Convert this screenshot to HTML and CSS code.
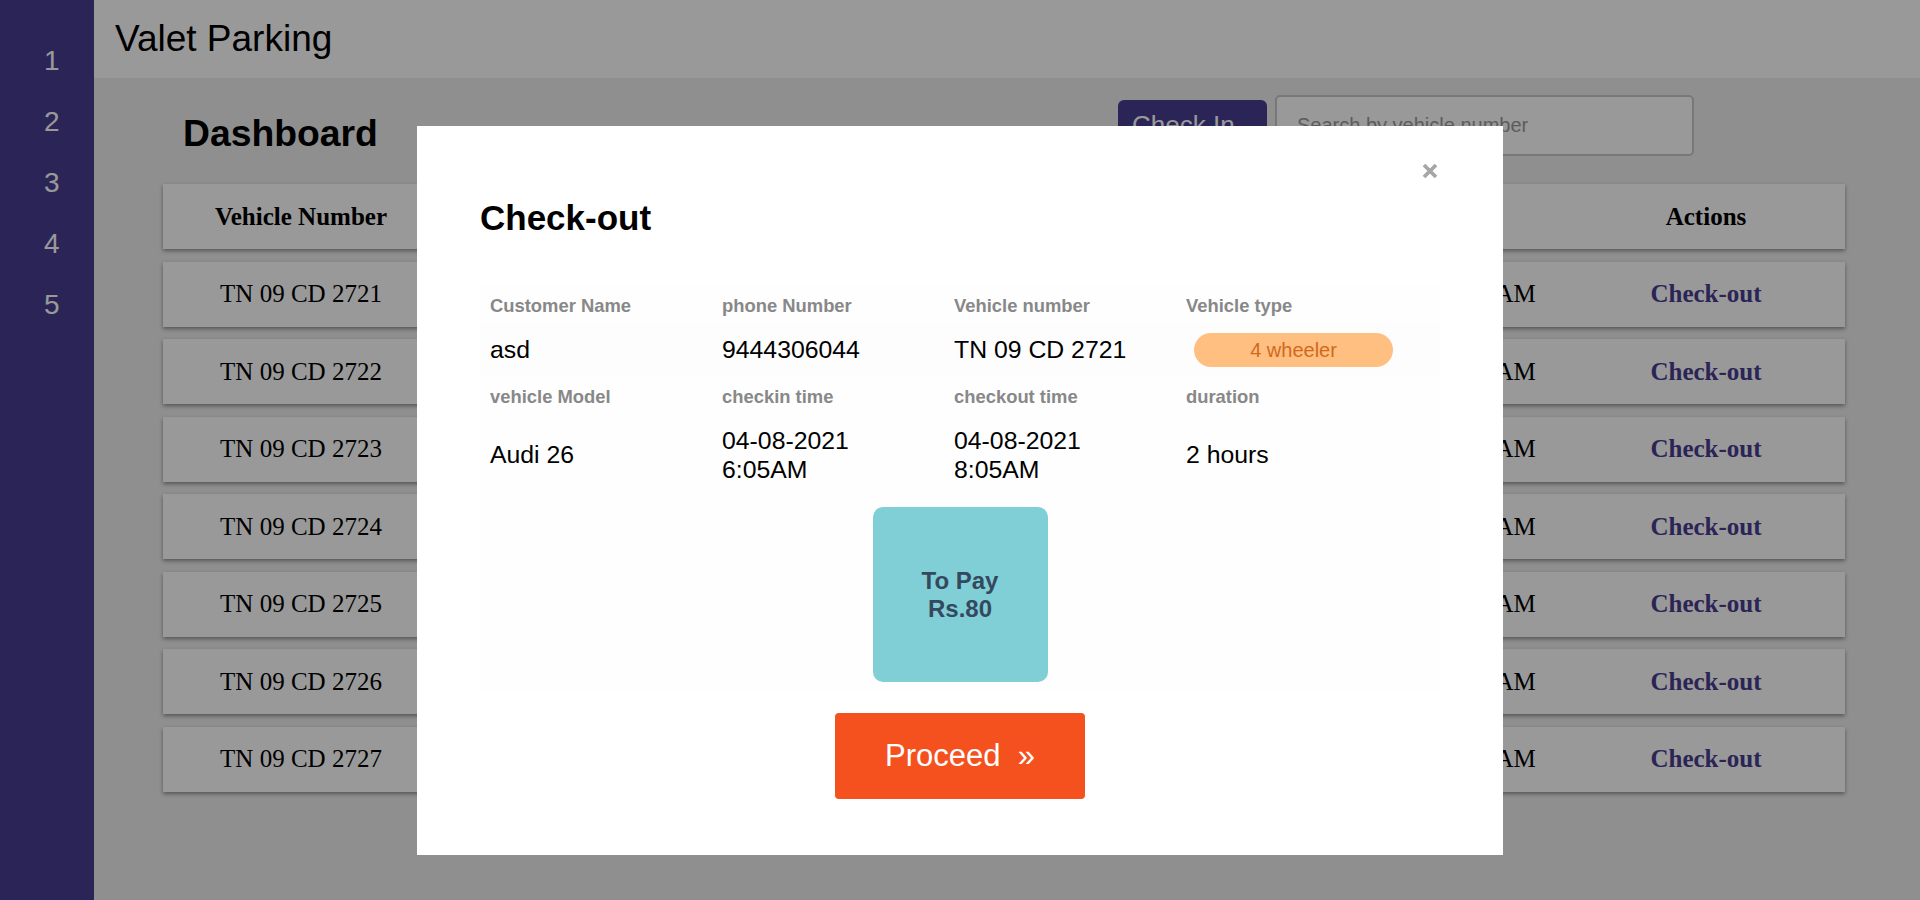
FILE: index.html
```html
<!DOCTYPE html>
<html lang="en">
<head>
<meta charset="utf-8">
<title>Valet Parking</title>
<link rel="stylesheet" href="styles.css">
</head>
<body>
<div class="app">
  <nav class="sidebar">
    <ul class="nav-list">
      <li class="nav-item">1</li>
      <li class="nav-item">2</li>
      <li class="nav-item">3</li>
      <li class="nav-item">4</li>
      <li class="nav-item">5</li>
    </ul>
  </nav>
  <div class="main">
    <header class="topbar"><span class="brand">Valet Parking</span></header>
    <section class="content">
      <div class="dash-head">
        <h1 class="dash-title">Dashboard</h1>
        <div class="toolbar">
          <button class="btn-checkin">Check In</button>
          <input class="search" type="text" placeholder="Search by vehicle number">
        </div>
      </div>
      <div class="table">
        <div class="trow thead">
          <div class="cell">Vehicle Number</div>
          <div class="cell">Customer</div>
          <div class="cell">Type</div>
          <div class="cell">Check-in</div>
          <div class="cell">Actions</div>
        </div>
        <div class="trow">
          <div class="cell">TN 09 CD 2721</div><div class="cell">asd</div><div class="cell">4 wheeler</div>
          <div class="cell">04-08-2021 6:05AM</div><div class="cell link">Check-out</div>
        </div>
        <div class="trow">
          <div class="cell">TN 09 CD 2722</div><div class="cell">asd</div><div class="cell">4 wheeler</div>
          <div class="cell">04-08-2021 6:05AM</div><div class="cell link">Check-out</div>
        </div>
        <div class="trow">
          <div class="cell">TN 09 CD 2723</div><div class="cell">asd</div><div class="cell">4 wheeler</div>
          <div class="cell">04-08-2021 6:05AM</div><div class="cell link">Check-out</div>
        </div>
        <div class="trow">
          <div class="cell">TN 09 CD 2724</div><div class="cell">asd</div><div class="cell">4 wheeler</div>
          <div class="cell">04-08-2021 6:05AM</div><div class="cell link">Check-out</div>
        </div>
        <div class="trow">
          <div class="cell">TN 09 CD 2725</div><div class="cell">asd</div><div class="cell">4 wheeler</div>
          <div class="cell">04-08-2021 6:05AM</div><div class="cell link">Check-out</div>
        </div>
        <div class="trow">
          <div class="cell">TN 09 CD 2726</div><div class="cell">asd</div><div class="cell">4 wheeler</div>
          <div class="cell">04-08-2021 6:05AM</div><div class="cell link">Check-out</div>
        </div>
        <div class="trow">
          <div class="cell">TN 09 CD 2727</div><div class="cell">asd</div><div class="cell">4 wheeler</div>
          <div class="cell">04-08-2021 6:05AM</div><div class="cell link">Check-out</div>
        </div>
      </div>
    </section>
  </div>
</div>

<div class="overlay">
  <div class="modal">
    <button class="close" aria-label="Close">
      <svg width="16" height="16" viewBox="0 0 16 16"><path d="M2 2 L14 14 M14 2 L2 14" stroke="#a6a6a6" stroke-width="3.8" fill="none"/></svg>
    </button>
    <h2 class="modal-title">Check-out</h2>
    <div class="info-box">
      <table class="info">
        <colgroup><col class="col-a"><col class="col-a"><col class="col-a"><col class="col-b"></colgroup>
        <tr class="lbl r1"><td>Customer Name</td><td>phone Number</td><td>Vehicle number</td><td>Vehicle type</td></tr>
        <tr class="val r2"><td>asd</td><td>9444306044</td><td>TN 09 CD 2721</td><td><span class="badge">4 wheeler</span></td></tr>
        <tr class="lbl r3"><td>vehicle Model</td><td>checkin time</td><td>checkout time</td><td>duration</td></tr>
        <tr class="val r4"><td>Audi 26</td><td>04-08-2021<br>6:05AM</td><td>04-08-2021<br>8:05AM</td><td>2 hours</td></tr>
      </table>
      <div class="pay-wrap"><div class="pay">To Pay<br>Rs.80</div></div>
    </div>
    <div class="actions"><button class="proceed">Proceed &nbsp;»</button></div>
  </div>
</div>
</body>
</html>
```

FILE: styles.css
```css
* { box-sizing: border-box; }
html, body { margin: 0; padding: 0; }
body {
  font-family: "Liberation Sans", Arial, sans-serif;
  background: #eeeeee;
  color: #000;
}

.app { display: flex; height: 900px; }

/* sidebar */
.sidebar {
  width: 94px;
  flex: none;
  background: #483c8f;
  padding-top: 31px;
}
.nav-list { list-style: none; margin: 0; padding: 0; }
.nav-item {
  font-size: 28px;
  line-height: 32px;
  padding: 14.4px 0 14.4px 44px;
  color: #ffffff;
}

/* main */
.main {
  flex: 1;
  min-width: 0;
  display: flex;
  flex-direction: column;
  background: #eeeeee;
}
.topbar {
  height: 78px;
  flex: none;
  background: #ffffff;
  padding: 18px 21px 0;
}
.brand { display: block; font-size: 37px; line-height: 42px; }

.content { padding: 0 75px 0 69px; }
.dash-head { display: flex; align-items: flex-start; height: 106px; }
.dash-title {
  margin: 34px 0 0 20px;
  font-size: 37.3px;
  line-height: 42px;
  font-weight: bold;
}
.toolbar {
  margin-left: auto;
  margin-right: 151px;
  padding-top: 17px;
  display: flex;
  align-items: flex-start;
  gap: 8px;
}
.btn-checkin {
  margin-top: 5px;
  width: 149px;
  height: 50px;
  border: 0;
  border-radius: 6px;
  background: #483c8f;
  color: #fff;
  font-family: "Liberation Sans", Arial, sans-serif;
  font-size: 26px;
  text-align: left;
  padding: 0 0 0 14px;
}
.search {
  width: 419px;
  height: 61px;
  border: 2px solid #c8c8c8;
  border-radius: 5px;
  background: #fff;
  padding: 0 0 0 20px;
  font-family: "Liberation Sans", Arial, sans-serif;
  font-size: 20px;
}
.search::placeholder { color: #9a9a9a; }

/* table */
.table {
  display: flex;
  flex-direction: column;
  gap: 12.5px;
  font-family: "Liberation Serif", "Times New Roman", serif;
  font-size: 25px;
}
.trow {
  display: grid;
  grid-template-columns: 276px 429px 429px 270px 278px;
  height: 65px;
  align-items: center;
  text-align: center;
  background: #ffffff;
  box-shadow: 0 2px 4px rgba(0, 0, 0, 0.4);
}
.thead { font-weight: bold; }
.cell { white-space: nowrap; }
.link { color: #483c8f; font-weight: bold; }

/* modal */
.overlay {
  position: fixed;
  inset: 0;
  background: rgba(0, 0, 0, 0.4);
  display: flex;
  justify-content: center;
  align-items: flex-start;
  padding-top: 126px;
}
.modal {
  position: relative;
  width: 1086px;
  background: #ffffff;
  padding: 72px 63px 56px;
}
.close {
  position: absolute;
  top: 37px;
  right: 65px;
  width: 16px;
  height: 16px;
  padding: 0;
  border: 0;
  background: none;
  display: block;
}
.close svg { display: block; }
.modal-title {
  margin: 0 0 46px;
  font-size: 35px;
  line-height: 39px;
  font-weight: bold;
}
.info-box { background: #fefefe; }
.info {
  border-collapse: collapse;
  table-layout: fixed;
  width: 960px;
}
.col-a { width: 232px; }
.col-b { width: 264px; }
.info td { padding: 0 10px; vertical-align: middle; }
.lbl td {
  font-size: 18.4px;
  line-height: 21px;
  font-weight: bold;
  color: #888888;
}
.val td { font-size: 24.8px; line-height: 28.6px; color: #000; }
.r1 td { padding-top: 12px; padding-bottom: 8px; }
.r2 { background: #fdfdfd; }
.r2 td { padding-top: 9px; padding-bottom: 9px; }
.r3 td { padding-top: 10px; padding-bottom: 10px; }
.r4 td { padding-top: 10px; padding-bottom: 12px; }
.badge {
  display: block;
  margin-left: 8px;
  width: 199px;
  height: 34px;
  line-height: 34px;
  border-radius: 17px;
  background: #ffbf80;
  color: #d2691e;
  font-size: 20px;
  text-align: center;
}
.pay-wrap { display: flex; justify-content: center; padding: 11px 0; }
.pay {
  width: 175px;
  height: 175px;
  border-radius: 10px;
  background: #81cfd6;
  color: #34495e;
  font-size: 24px;
  line-height: 28px;
  font-weight: bold;
  display: flex;
  align-items: center;
  justify-content: center;
  text-align: center;
}
.actions { display: flex; justify-content: center; margin-top: 20px; }
.proceed {
  width: 250px;
  height: 86px;
  border: 0;
  border-radius: 4px;
  background: #f4511e;
  color: #ffffff;
  font-family: "Liberation Sans", Arial, sans-serif;
  font-size: 31px;
  padding: 0;
}
```
